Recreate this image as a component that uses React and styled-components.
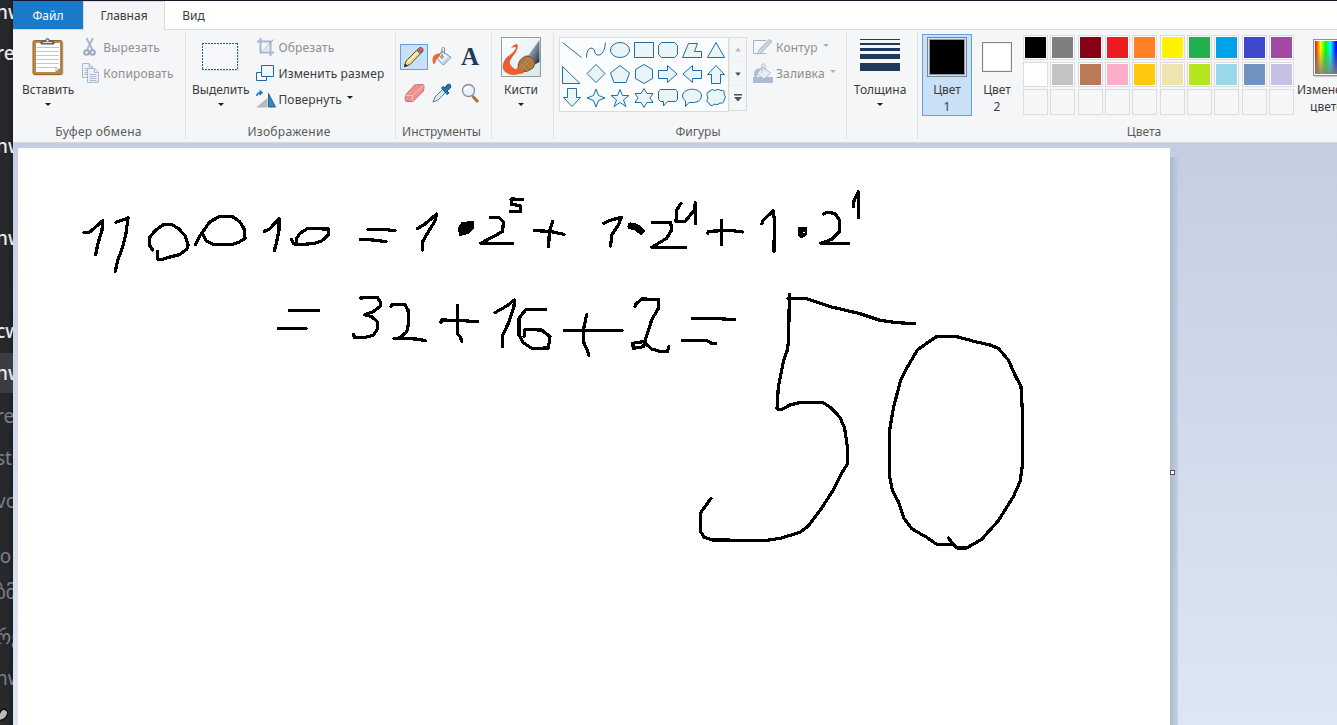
import React from "react";
import styled, { createGlobalStyle, css } from "styled-components";

const GlobalStyle = createGlobalStyle`
  * { box-sizing: border-box; }
  body { margin: 0; overflow: hidden; }
`;

const Screen = styled.div`
  display: flex;
  width: 100vw;
  height: 100vh;
  overflow: hidden;
  background: #27282c;
  font-family: "Noto Sans", "Open Sans", sans-serif;
  font-size: 12px;
  color: #3c3c3c;
`;

const Sidebar = styled.aside`
  flex: 0 0 13px;
  display: flex;
  flex-direction: column;
  overflow: hidden;
  background: linear-gradient(90deg, #27282c 60%, #1d1e21);
`;

const SideRow = styled.div`
  flex: 0 0 ${(p) => p.$h}px;
  min-height: 0;
  margin-top: ${(p) => p.$mt || 0}px;
  display: flex;
  align-items: center;
  white-space: nowrap;
  text-indent: ${(p) => p.$shift ?? -4}px;
  font: ${(p) => (p.$dim ? 400 : 500)} 19px/1 "Noto Sans", "DejaVu Sans", sans-serif;
  color: ${(p) => (p.$dim ? "#7c7f86" : "#e9e9ea")};
  background: ${(p) => (p.$active ? "#3c3d42" : "transparent")};
`;

const Window = styled.main`
  flex: 1;
  min-width: 0;
  display: flex;
  flex-direction: column;
  border-top: 1px solid #14162a;
`;

const TabBar = styled.nav`
  display: flex;
  flex: 0 0 29px;
  height: 29px;
  background: #fff;
  border-bottom: 1px solid #dadbdc;
`;

const Tab = styled.div`
  width: ${(p) => p.$w}px;
  height: ${(p) => (p.$active ? 29 : 28)}px;
  padding-bottom: ${(p) => (p.$active ? 1 : 0)}px;
  display: flex;
  align-items: center;
  justify-content: center;
  ${(p) => p.$file && css`background: #1979ca; color: #fff;`}
  ${(p) =>
    p.$active &&
    css`
      background: #f5f6f7;
      border: 1px solid #dadbdc;
      border-bottom: 0;
    `}
`;

const Ribbon = styled.header`
  display: flex;
  flex: 0 0 113px;
  padding: 2px 0 3px;
  overflow: hidden;
  background: #f5f6f7;
  border-bottom: 1px solid #d5d7da;
`;

const Group = styled.section`
  flex: 0 0 ${(p) => p.$w}px;
  display: flex;
  flex-direction: column;
  border-right: ${(p) => (p.$last ? 0 : 1)}px solid #e2e3e4;
`;

const GroupBody = styled.div`
  display: flex;
  flex: 0 0 91px;
  padding-left: ${(p) => p.$pad}px;
`;

const GroupTitle = styled.div`
  margin-top: 1px;
  line-height: 16px;
  text-align: center;
  letter-spacing: ${(p) => p.$track || 0}px;
  color: #5a5a5a;
  padding-right: ${(p) => p.$shift || 0}px;
`;

const BigButton = styled.div`
  flex: 0 0 ${(p) => p.$w}px;
  height: 82px;
  margin-top: 2px;
  display: flex;
  flex-direction: column;
  align-items: center;
  white-space: nowrap;
  line-height: 17px;
  ${(p) => p.$selected && css`background: #c9e0f7; box-shadow: inset 0 0 0 1px #62a2e4;`}
`;

const IconBox = styled.div`
  height: 47px;
  padding-bottom: 1px;
  display: flex;
  align-items: center;
  justify-content: center;
`;

const Arrow = styled.i`
  width: 0;
  height: 0;
  margin: ${(p) => (p.$inline ? "-4px 0 0 5px" : "5px 0 0")};
  border: 3px solid transparent;
  border-top-color: ${(p) => (p.$dim ? "#b1b1b1" : "#1e1e1e")};
  border-bottom: 0;
`;

const SmallList = styled.div`
  display: flex;
  flex-direction: column;
  margin-left: ${(p) => p.$gap}px;
  padding-top: 2px;
`;

const SmallButton = styled.div`
  display: flex;
  align-items: center;
  height: 26px;
  white-space: nowrap;
  letter-spacing: 0.15px;
  color: ${(p) => (p.$dim ? "#8f8f8f" : "#3c3c3c")};
  svg { flex: none; margin-right: ${(p) => p.$gap ?? 3}px; }
`;

const ToolGrid = styled.div`
  display: grid;
  grid-template: 26px 26px / repeat(3, 28px);
  row-gap: 10px;
  padding-top: 12px;
`;

const Tool = styled.div`
  display: flex;
  align-items: center;
  justify-content: center;
  ${(p) => p.$selected && css`background: #c9e0f7; border: 1px solid #62a2e4;`}
`;

const ShapeBox = styled.div`
  display: grid;
  grid-template: repeat(3, 24px) / repeat(7, 24px);
  width: 170px;
  height: 75px;
  margin-top: 5px;
  background: #fbfcfd;
  border: 1px solid #dadcde;
`;

const ShapeScroll = styled.div`
  display: flex;
  flex-direction: column;
  align-items: center;
  width: 18px;
  height: 74px;
  margin: 5px 6px 0 0;
  border: 1px solid #dadcde;
  border-left-color: #e8e9ea;
  svg { border-bottom: 1px solid #eeeff0; }
  svg:last-child { border: 0; }
`;

const StrokeBars = styled.div`
  display: flex;
  flex-direction: column;
  gap: 3px;
  width: 40px;
  height: 32px;
  margin-bottom: 4px;
`;

const Bar = styled.div`
  height: ${(p) => p.$h}px;
  margin-bottom: ${(p) => p.$mb || 0}px;
  background: #1e395b;
`;

const ColorWell = styled.div`
  width: ${(p) => p.$size}px;
  height: ${(p) => p.$size}px;
  border: 1px solid #7f858c;
  background: ${(p) => p.$color};
  box-shadow: inset 0 0 0 ${(p) => (p.$large ? "1px #d5e4f3, inset 0 0 0 2px #8399ae" : "1px #f1f1f1")};
`;

const Palette = styled.div`
  display: grid;
  grid-template-columns: repeat(10, 25px);
  grid-template-rows: 25px 25px 26px;
  justify-content: space-between;
  row-gap: 2px;
  width: 271px;
  margin: 3px 3px 0 1px;
`;

const Swatch = styled.div`
  border: 1px solid #dadcde;
  background: ${(p) => p.$color || "transparent"};
  box-shadow: ${(p) => (p.$color ? "inset 0 0 0 1px #fff" : "none")};
`;

const Spectrum = styled.div`
  width: 35px;
  height: 37px;
  border: 1px solid #909090;
  padding: 1px;
  background:
    linear-gradient(180deg, transparent 20%, rgba(128, 128, 128, 0.9)) content-box,
    linear-gradient(90deg, #f00, #ff0 18%, #0f0 34%, #0ff 50%, #00f 68%, #f0f 84%, #f00) content-box,
    #fff;
  box-shadow: 1px 1px 1px #ccc;
`;

const Workspace = styled.div`
  flex: 1;
  min-height: 0;
  display: flex;
  padding: 5px 0 0 5px;
  background: linear-gradient(180deg, #c5cee0, #dce6f4);
`;

const Canvas = styled.div`
  flex: 0 0 1152px;
  background: #fff;
  overflow: hidden;
  svg { display: block; }
`;

const CanvasEdge = styled.div`
  width: 8px;
  margin-top: 9px;
  padding-top: 313px;
  background: linear-gradient(90deg, #a9b8cc, rgba(190, 203, 221, 0.75));
`;

const Handle = styled.div`
  width: 5px;
  height: 5px;
  border: 1px solid #555;
  background: #fff;
`;

const Svg = ({ w, h = w, children, ...rest }) => (
  <svg width={w} height={h} viewBox={`0 0 ${w} ${h}`} fill="none" {...rest}>{children}</svg>
);

const Clipboard = () => (
  <Svg w={32} h={38}>
    <rect x="1.5" y="3.5" width="30" height="34" rx="2" fill="#c9c9c9" />
    <rect x="1" y="2.5" width="29" height="34" rx="1.5" fill="#bd8747" stroke="#966528" />
    <path d="M4 5H28V30L23 34H4Z" fill="#fff" />
    <path d="M4.500 9.500H27M4.500 13.500H27M4.500 17.500H27M4.500 21.500H27M4.500 25.500H27M4.500 29.500H25" stroke="#b5c8d8" />
    <path d="M23 34V30H28Z" fill="#d2d7dd" />
    <path d="M9 6V4L13 3Q15.500 -2 18 3L22 4V6Z" fill="#777" stroke="#555" />
    <path d="M11 4.500H20" stroke="#ddd" />
    <circle cx="15.500" cy="2.500" r="1" fill="#fff" />
  </Svg>
);

const Scissors = () => (
  <Svg w={16} h={20}>
    <path d="M4.500 1L10.500 13M11 1L5 13" stroke="#aab8d0" strokeWidth="2" />
    <circle cx="4.500" cy="15.500" r="2.300" stroke="#98a9c7" strokeWidth="2" />
    <circle cx="10.500" cy="15.500" r="2.300" stroke="#98a9c7" strokeWidth="2" />
  </Svg>
);

const Pages = () => (
  <Svg w={17} h={20} stroke="#a9b9d3">
    <path d="M.5 .5H7L10.500 4V14.500H.5ZM7 .5V4H10.500" fill="#eff3f9" />
    <path d="M2.500 5.500H8M2.500 7.500H8M2.500 9.500H8M2.500 11.500H8" />
    <path d="M5.500 5.500H12.500L16.500 9.500V19.500H5.500ZM12.500 5.500V9.500H16.500" fill="#eff3f9" />
    <path d="M7.500 11.500H14.500M7.500 13.500H14.500M7.500 15.500H14.500M7.500 17.500H14.500" />
  </Svg>
);

const Marquee = () => (
  <Svg w={37} h={28}>
    <path d="M3 27.500H36.500V3" stroke="#e0e0e0" />
    <rect x=".5" y=".5" width="35" height="26" fill="#f6f8fb" />
    <path d="M0 .5H36M0 26.500H36M.5 0V27M35.500 0V27" stroke="#1866a5" strokeDasharray="2 1" shapeRendering="crispEdges" />
  </Svg>
);

const Crop = () => (
  <Svg w={19}>
    <path d="M1 3.500H14.500V18M4.500 0V14.500H18" stroke="#a7b6cd" strokeWidth="2" />
    <path d="M7 12L17.500 1.500" stroke="#91a7c8" />
    <path d="M6 12.500L12.500 6V12.500Z" fill="#d8dfeb" />
  </Svg>
);

const Resize = () => (
  <Svg w={19} h={17} stroke="#1b69a7">
    <path d="M.5 7.500H10.500V15.500H.5Z" fill="#fff" />
    <path d="M5.500 .5H17.500V11.500H5.500Z" fill="#eef8fb" />
  </Svg>
);

const Rotate = () => (
  <Svg w={20} h={18}>
    <path d="M0 17.500H11.500V8Z" fill="#b9b9b9" />
    <path d="M12.500 3.500V17H19.500Z" fill="#3c86bb" stroke="#1b659e" />
    <path d="M.8 6Q1 2.500 6 2.500M3.500 .5L6 2.500L3.500 5" stroke="#1879c8" strokeWidth="1.500" />
  </Svg>
);

const Pencil = () => (
  <Svg w={22}>
    <path d="M1.500 20.500L3 15L15.500 2.500L19 6L7 18.500Z" fill="#f5d98c" stroke="#5c4b2d" />
    <path d="M5 16L17 4" stroke="#fff1ba" strokeWidth="1.500" />
    <path d="M14.500 3.500L17 1.500Q18.500 1 20 3Q20.500 4 19 6.500Z" fill="#d4656b" stroke="#804349" />
    <path d="M14 4L18 8" stroke="#5c9671" strokeWidth="2" />
    <path d="M1 21L2 17.500L5 20Z" fill="#222" />
  </Svg>
);

const Bucket = () => (
  <Svg w={20} h={22}>
    <path d="M10 5L19 11.500L11.500 19L4.500 12Z" fill="#edf5fa" stroke="#5886ae" />
    <path d="M11 17L17.500 11.500" stroke="#bad3e4" strokeWidth="2.500" />
    <path d="M10 11V2.500Q11 0 12.500 2V8" stroke="#868e96" />
    <path d="M8.500 7.500Q3 7 1 11Q-.2 15 1.500 18Q3.500 18.500 4 14L8 10Z" fill="#ed6737" />
    <circle cx="10" cy="11" r="1.300" fill="#fff" stroke="#777" />
  </Svg>
);

const Letter = styled.span`
  font: 700 25px/26px "Liberation Serif", serif;
  color: #1e395b;
`;

const Eraser = () => (
  <Svg w={21} h={20}>
    <path d="M1.500 12L10 2.500Q11 1.500 12.500 1.500H19Q20.500 2 20 4L19.500 8L9 18.500H2Q.5 16 1.500 12Z" fill="#ed9191" stroke="#cf7272" />
    <path d="M1.500 12.500H8.500L19.500 2.500M8.500 12.500V18" stroke="#f8c1bd" />
  </Svg>
);

const Picker = () => (
  <Svg w={20}>
    <path d="M1 19L3 14L11 6L14 9L6 17Z" fill="#d5edf4" stroke="#627783" />
    <path d="M9.500 5L11 3.500L13 5Q15 .5 17.500 1Q19.500 2.500 18.500 5L15 8L17 10L15 11.500Z" fill="#2175bd" stroke="#155288" />
  </Svg>
);

const Magnifier = () => (
  <Svg w={19} h={21}>
    <path d="M11.500 13L17 19" stroke="#ad722b" strokeWidth="3" />
    <circle cx="7.500" cy="7.500" r="6" fill="#e7f4fb" stroke="#858fa1" strokeWidth="1.300" />
    <path d="M4 7Q5 3.500 9 4" stroke="#fff" strokeWidth="2" />
  </Svg>
);

const Brush = () => (
  <Svg w={40}>
    <defs>
      <linearGradient id="paper" x1="0" y1="0" x2="1" y2="1">
        <stop stopColor="#fff" /><stop offset="1" stopColor="#d5e9ed" />
      </linearGradient>
      <linearGradient id="metal" x1="0" y1="0" x2="1" y2="1">
        <stop stopColor="#fff" /><stop offset=".45" stopColor="#8794a4" /><stop offset="1" stopColor="#17283d" />
      </linearGradient>
    </defs>
    <rect x=".5" y=".5" width="39" height="39" fill="url(#paper)" stroke="#999" />
    <path d="M26 20L38.500 3V25L33 28Z" fill="url(#metal)" />
    <path d="M16 7Q13 7 10 11Q17 8 14 13Q11 17 6 20Q1 25 2 32Q4 37 12 38Q20 37 22 35L14 32Q8 28 9 24Q11 20 15 15Q18 9 16 7Z" fill="#ea5e32" />
    <path d="M17 31Q17 22 25 19Q29 18 33 23Q35 27 32 31Q28 35 20 35Z" fill="#a9773f" stroke="#805326" />
    <path d="M20 27L27 34M23 24L31 31M26 21L33 28M20 33L31 22M18 31L28 21" stroke="#d0a065" strokeWidth=".5" />
    <path d="M16 31Q21 31 23 36Q17 38 11 37Z" fill="#f15b32" />
  </Svg>
);

const OutlineIcon = () => (
  <Svg w={20} h={18}>
    <path d="M13 2.500H.5V15.500H13" stroke="#a6b4cb" />
    <path d="M4.500 16L6 12L16 1.500L19 3.500L8.500 14.500Z" fill="#e6ebf3" stroke="#a0afc8" />
    <path d="M7.500 13L17.500 2.500" stroke="#c3cede" strokeWidth="2" />
  </Svg>
);

const FillIcon = () => (
  <Svg w={20}>
    <path d="M0 14H20V20H0Z" fill="#adbbd2" />
    <path d="M9 4L17.500 10L11 16L4 11Z" fill="#ebeff5" stroke="#aab8ce" />
    <path d="M9 10V1.500Q11 -.5 12 2V7" stroke="#aab8ce" />
    <path d="M8 5Q0 6 1 12Q2 15 4 14V11Z" fill="#aebcd2" />
  </Svg>
);

const SHAPES = [
  "M2.500 4.500L21.500 19.500",
  "M2.500 19.500Q2.500 10 8 10Q11 11 11 15Q12 18 16 17Q21 14 21.500 4.500",
  "M21.500 12A9.500 7.500 0 1 1 2.500 12A9.500 7.500 0 1 1 21.500 12Z",
  "M2.500 4.500H21.500V19.500H2.500Z",
  "M5.500 4.500H18.500L21.500 7.500V16.500L18.500 19.500H5.500L2.500 16.500V7.500Z",
  "M8.500 5.500H17.500L14.500 13.500H21.500V19.500H2.500Z",
  "M12 4.500L20.500 19.500H3.500Z",
  "M2.500 4.500V21.500H20Z",
  "M12 2.500L21 11.500L12 20.500L3 11.500Z",
  "M12 3.500L21.500 11L18 20.500H6L2.500 11Z",
  "M12 2.500L20.500 7.500V16.500L12 21.500L3.500 16.500V7.500Z",
  "M2.500 8.500H11.500V3.500L21 12L11.500 20.500V16.500H2.500Z",
  "M21.500 8.500H12.500V3.500L3 12L12.500 20.500V16.500H21.500Z",
  "M12 3.500L20.500 12.500H16.500V21.500H7.500V12.500H3.500Z",
  "M7.500 2.500H16.500V11.500H20.500L12 20.500L3.500 11.500H7.500Z",
  "M12 3L14.500 9.500L21 12L14.500 14.500L12 21L9.500 14.500L3 12L9.500 9.500Z",
  "M12 3.500L14.500 9.500H21L15.500 14L18 20.500L12 16.500L6 20.500L8.500 14L3 9.500H9.500Z",
  "M12 2.500L15 7.500H21L18 12L21 16.500H15L12 21.500L9 16.500H3L6 12L3 7.500H9Z",
  "M4.500 3.500H19.500L21.500 5.500V13.500L19.500 15.500H11.500L7.500 20V15.500H4.500L2.500 13.500V5.500Z",
  "M9 16.500L5.500 20.500V15Q2.500 13 2.500 10C3 1 21.500 1 21.500 10Q21 17.500 9 16.500Z",
  "M6 5Q8 2.500 11 4.500Q14 2 17 4.500Q21 3.500 20 8Q23 11 20 14Q20 18 16 17Q13 20 10 18Q9 21 6 19L5 17Q1.500 16 4 12Q1.500 8 4 6Z",
];

const PALETTE = [
  "#000000", "#7f7f7f", "#880015", "#ed1c24", "#ff7f27", "#fff200", "#22b14c", "#00a2e8", "#3f48cc", "#a349a4",
  "#ffffff", "#c3c3c3", "#b97a57", "#ffaec9", "#ffc90e", "#efe4b0", "#b5e61d", "#99d9ea", "#7092be", "#c8bfe7",
  ...Array(10).fill(""),
];

/* Freehand strokes, in third-of-a-pixel units from each batch's origin. */
const INK = [
  { x: 52, y: 32, d: "M42 158L60 156L98 122L96 150L84 190L77 224M138 127L174 114L168 160L158 200L142 245L136 274M248 210L238 195L240 170L258 150L280 134L304 133L326 146L346 168L354 195L350 208L328 224L300 231L275 239L263 238V214M377 194L388 170L402 150L420 125L450 109H486L508 124L522 145L525 175L508 186L484 194H432L410 184L398 162M583 154L600 146L627 115V150L620 185L613 212M664 178L670 190L680 194V175L690 160L712 146L775 147V165L755 183L730 191L680 194M658 391H746M625 445H708" },
  { x: 322, y: 32, d: "M84 148H130L165 152M62 178L100 180L138 185M232 146L255 132L290 102L284 125L265 155L248 185V210M452 113H478L490 125L488 154L460 170L422 190H517M547 58L513 57L515 74L540 76L542 94L511 95M583 152L630 154L672 163M638 124L628 155L626 200M62 354L112 352L122 368L120 380L98 396L74 404L95 410L112 425V448L100 466L75 472H43L41 463M153 380L155 374H195L204 390L206 430L200 455L180 474L162 475L230 477L256 482M303 426L305 420L350 421L412 425M352 377V460L362 473L365 484M465 398L500 378L523 360L522 380L505 430L488 465L487 500M617 388H558L537 415V465L550 488L575 505L625 504L630 470L605 450L555 449L552 470" },
  { x: 542, y: 32, d: "M131 130L150 121L184 112L175 135L155 165L152 198M278 127H332L335 150L320 175L275 202H376M363 70L350 90L348 125H375L403 90L406 68V130M443 160L445 154L510 151L547 156M484 122V193M606 132L608 122L640 92L643 120L642 214M790 102L800 97L825 100L838 120V155L815 178L782 190H865M880 80L882 62L895 35V112M14 451H186M80 404L70 450L72 490L82 510L86 526M225 380L228 372L245 357L295 358V385L275 420L262 460L250 500L220 505L218 490L250 485L275 507L300 514H323L326 500" },
  { x: 662, y: 132, d: "M37 115H100L163 119M7 181H80L95 190H107M324 55H375L455 81L540 101L600 121L650 128L704 131M328 43L326 180L322 210L310 245L295 320L291 387L305 388L330 375L362 367H428L452 383L480 412L494 445L502 500V552L485 580L460 630L425 684L385 738L360 757L300 775L260 781L97 780L72 771L62 755V698L93 655M806 774L818 792L832 804H860L905 778L955 722L1000 650L1020 605L1028 550V410L1023 320L1005 285L985 240L955 205L930 195L890 186L830 170H770L750 183L712 210L680 265L662 300L640 385L629 450V590L637 630L655 665L672 715L695 746L740 772L770 793H815" },
];

const SIDE = [
  { h: 25, text: "nw" },
  { h: 56, text: "re" },
  { h: 130, text: "nw" },
  { h: 54, text: "nw" },
  { h: 40, mt: 46, text: "cw" },
  { h: 40, mt: 2, text: "nw", active: true },
  { h: 46, text: "re", dim: true },
  { h: 38, text: "st", dim: true },
  { h: 48, text: "vo", dim: true },
  { h: 62, text: "იo", dim: true, shift: -10 },
  { h: 10, text: "ბმ", dim: true },
  { h: 80, text: "რე", dim: true },
  { h: 2, text: "nw", dim: true },
];

export default function App() {
  return (
    <Screen>
      <GlobalStyle />
      <Sidebar>
        {SIDE.map(({ h, mt, text, dim, active, shift }, i) => (
          <SideRow key={i} $h={h} $mt={mt} $dim={dim} $active={active} $shift={shift}>{text}</SideRow>
        ))}
        <SideRow $h={70}>
          <Svg w={12} h={14}><path d="M-1 10Q3 9 4 6" stroke="#111" strokeWidth="9" strokeLinecap="round" /><path d="M-1 10Q3 9 4 6" stroke="#bbb" strokeWidth="6" strokeLinecap="round" /></Svg>
        </SideRow>
      </Sidebar>
      <Window>
        <TabBar>
          <Tab $w={70} $file>Файл</Tab>
          <Tab $w={82} $active>Главная</Tab>
          <Tab $w={57}>Вид</Tab>
        </TabBar>
        <Ribbon>
          <Group $w={173}>
            <GroupBody $pad={9}>
              <BigButton $w={49}><IconBox><Clipboard /></IconBox>Вставить<Arrow /></BigButton>
              <SmallList $gap={8}>
                <SmallButton $dim $gap={5}><Scissors />Вырезать</SmallButton>
                <SmallButton $dim $gap={4}><Pages />Копировать</SmallButton>
              </SmallList>
            </GroupBody>
            <GroupTitle $track={0.3} $shift={1}>Буфер обмена</GroupTitle>
          </Group>
          <Group $w={210}>
            <GroupBody $pad={6}>
              <BigButton $w={53}><IconBox><Marquee /></IconBox>Выделить<Arrow /></BigButton>
              <SmallList $gap={7}>
                <SmallButton $dim $gap={3}><Crop />Обрезать</SmallButton>
                <SmallButton $gap={3}><Resize />Изменить размер</SmallButton>
                <SmallButton $gap={2}><Rotate />Повернуть<Arrow $inline /></SmallButton>
              </SmallList>
            </GroupBody>
            <GroupTitle $shift={3} $track={0.3}>Изображение</GroupTitle>
          </Group>
          <Group $w={96}>
            <GroupBody $pad={4}>
              <ToolGrid>
                <Tool $selected><Pencil /></Tool>
                <Tool><Bucket /></Tool>
                <Tool><Letter>A</Letter></Tool>
                <Tool><Eraser /></Tool>
                <Tool><Picker /></Tool>
                <Tool><Magnifier /></Tool>
              </ToolGrid>
            </GroupBody>
            <GroupTitle $shift={4}>Инструменты</GroupTitle>
          </Group>
          <Group $w={62}>
            <GroupBody $pad={4}>
              <BigButton $w={50}><IconBox><Brush /></IconBox>Кисти<Arrow /></BigButton>
            </GroupBody>
          </Group>
          <Group $w={293}>
            <GroupBody $pad={5}>
              <ShapeBox>
                {SHAPES.map((d, i) => (
                  <Svg key={i} w={24}>
                    <path d={d} stroke="#1d6fa9" fill={i < 2 ? "none" : "#eaf5f8"} />
                  </Svg>
                ))}
              </ShapeBox>
              <ShapeScroll>
                <Svg w={16} h={24}><path d="M5 14L8 10L11 14Z" fill="#b3bac8" /></Svg>
                <Svg w={16} h={24}><path d="M5 11H11L8 14.500Z" fill="#3f5470" /></Svg>
                <Svg w={16} h={24}><path d="M4 8H12V9.500H4ZM4 11H12L8 15.500Z" fill="#3f5470" /></Svg>
              </ShapeScroll>
              <SmallList $gap={0}>
                <SmallButton $dim><OutlineIcon />Контур<Arrow $inline $dim /></SmallButton>
                <SmallButton $dim><FillIcon />Заливка<Arrow $inline $dim /></SmallButton>
              </SmallList>
            </GroupBody>
            <GroupTitle $shift={4}>Фигуры</GroupTitle>
          </Group>
          <Group $w={71}>
            <GroupBody $pad={6}>
              <BigButton $w={54}>
                <IconBox>
                  <StrokeBars><Bar $h={1} /><Bar $h={2} /><Bar $h={3} /><Bar $h={5} $mb={1} /><Bar $h={8} /></StrokeBars>
                </IconBox>
                Толщина<Arrow />
              </BigButton>
            </GroupBody>
          </Group>
          <Group $w={452} $last>
            <GroupBody $pad={4}>
              <BigButton $w={50} $selected>
                <IconBox><ColorWell $size={40} $color="#000" $large /></IconBox>
                <span>Цвет</span><span>1</span>
              </BigButton>
              <BigButton $w={50}>
                <IconBox><ColorWell $size={30} $color="#fff" /></IconBox>
                <span>Цвет</span><span>2</span>
              </BigButton>
              <Palette>
                {PALETTE.map((c, i) => <Swatch key={i} $color={c} />)}
              </Palette>
              <BigButton $w={64}>
                <IconBox><Spectrum /></IconBox>
                <span>Изменение</span><span>цветов</span>
              </BigButton>
            </GroupBody>
            <GroupTitle>Цвета</GroupTitle>
          </Group>
        </Ribbon>
        <Workspace>
          <Canvas>
            <Svg w={1152} h={577} shapeRendering="crispEdges">
              {INK.map((s, i) => (
                <path
                  key={i}
                  transform={`translate(${s.x} ${s.y}) scale(.33333)`}
                  d={s.d}
                  stroke="#000"
                  strokeWidth="9.6"
                  strokeLinecap="round"
                  strokeLinejoin="round"
                />
              ))}
              <path d="M441 80L444 75L455 74V80L450 85L442 87Z" fill="#000" stroke="#000" strokeWidth="2" />
              <path d="M613 78L618 79L623 83" stroke="#000" strokeWidth="7" strokeLinecap="round" />
              <path d="M780 79H788V87L784 90L780 87Z" fill="#000" stroke="#000" />
              <path d="M785 84H787" stroke="#fff" />
            </Svg>
          </Canvas>
          <CanvasEdge><Handle /></CanvasEdge>
        </Workspace>
      </Window>
    </Screen>
  );
}
